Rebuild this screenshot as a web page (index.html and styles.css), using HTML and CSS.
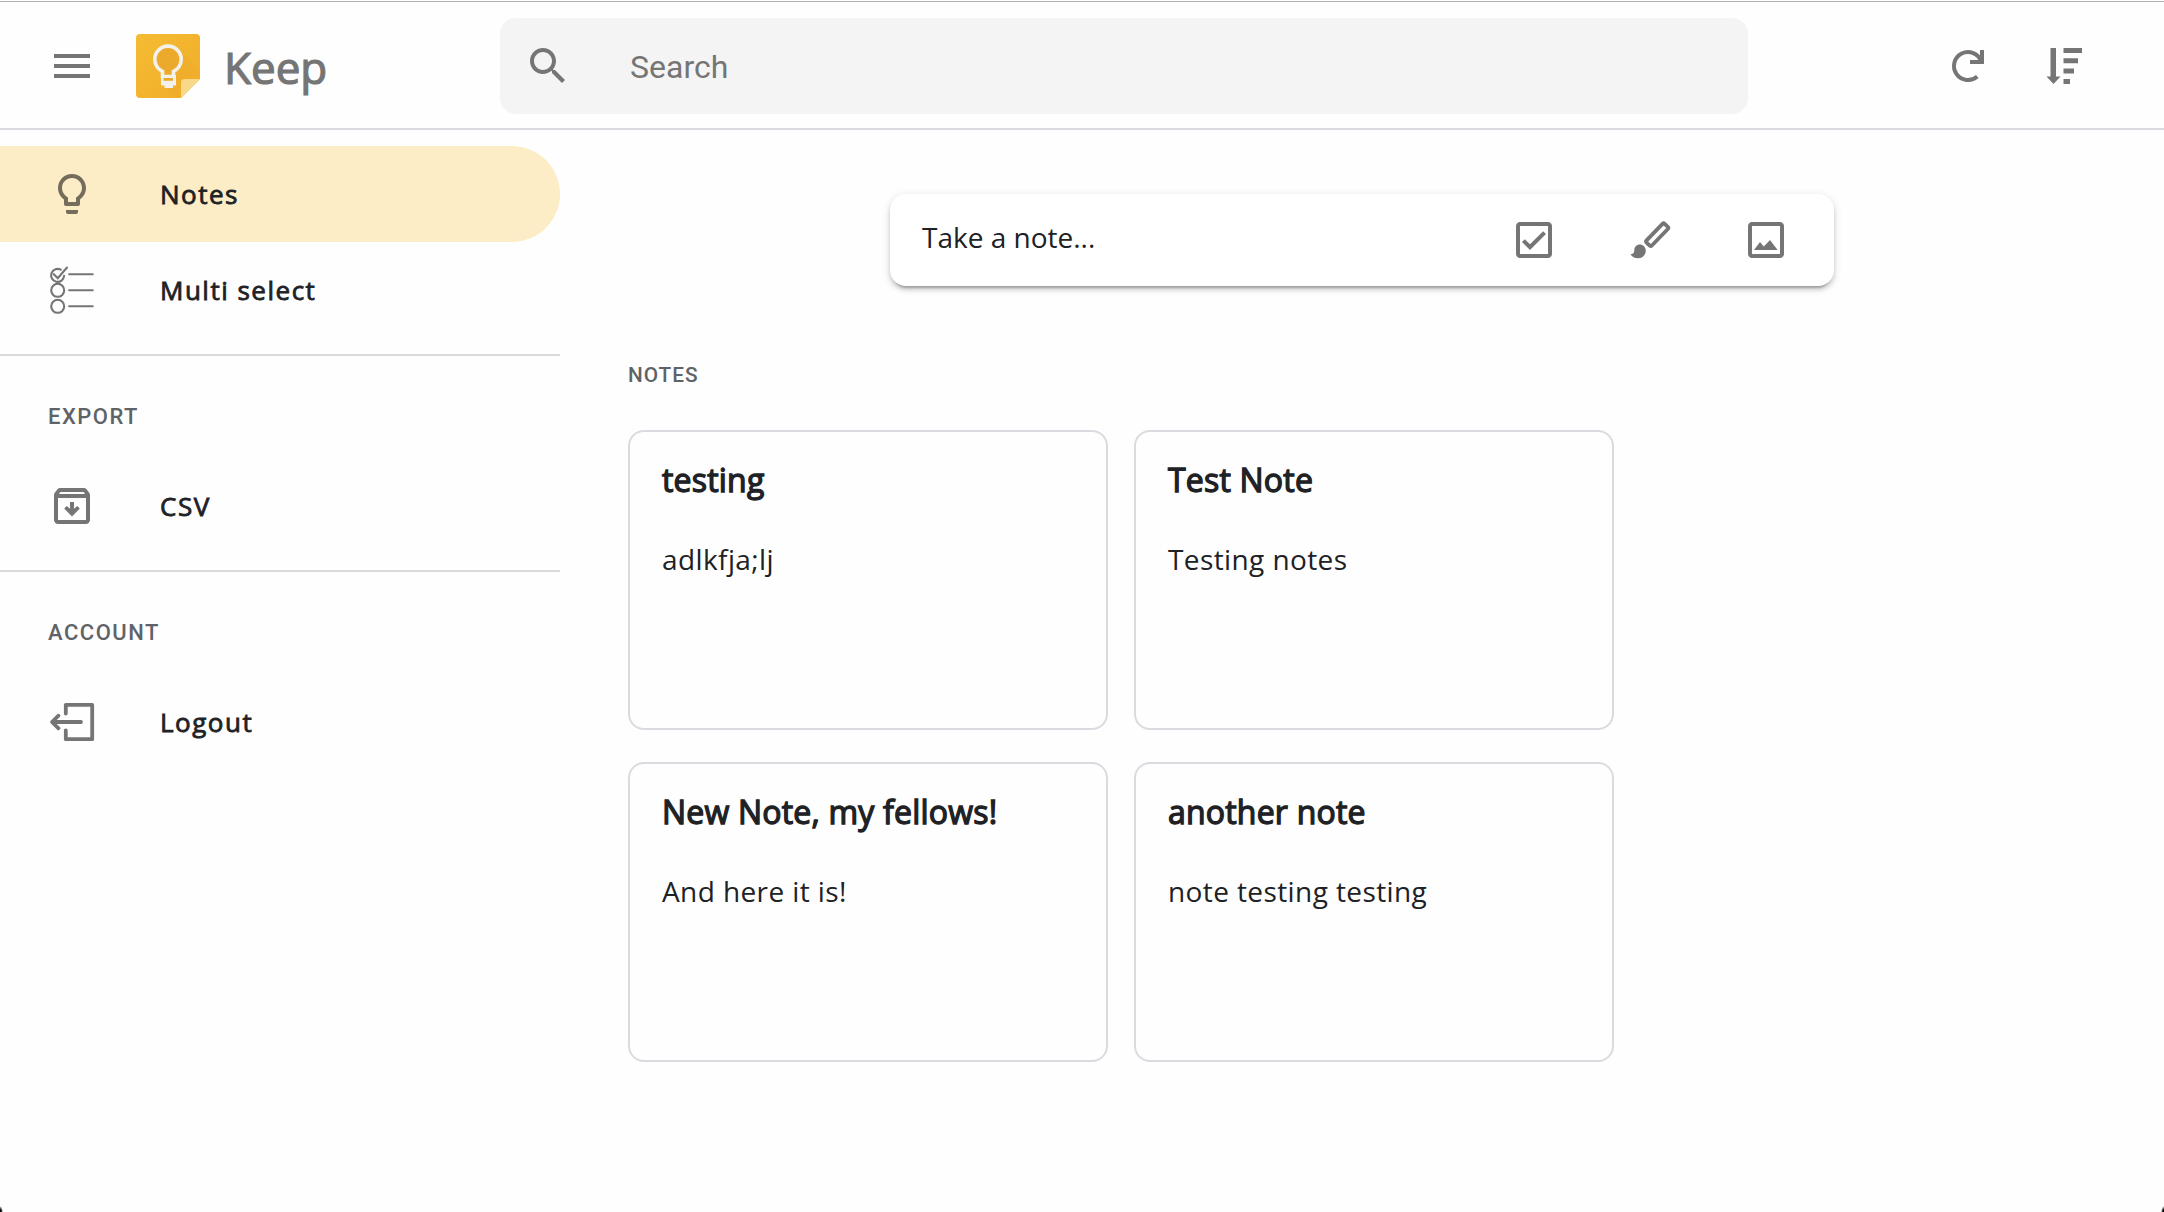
FILE: index.html
```
<!DOCTYPE html>
<html lang="en">
<head>
<meta charset="utf-8">
<title>Keep</title>
<link rel="stylesheet" href="styles.css">
</head>
<body>
<header class="topbar">
  <svg class="icon menu" viewBox="0 0 24 24"><path d="M3 18h18v-2H3v2zm0-5h18v-2H3v2zm0-7v2h18V6H3z"/></svg>
  <div class="brand">
    <svg class="logo" viewBox="0 0 64 64">
      <defs>
        <linearGradient id="paper" x1="0" y1="0" x2="1" y2="1"><stop offset="0" stop-color="#f5bb33"/><stop offset="1" stop-color="#f0ad29"/></linearGradient>
        <linearGradient id="shade" x1="0" y1="0" x2="1" y2="1"><stop offset="0" stop-color="#e8a52a"/><stop offset="1" stop-color="#f0ad29"/></linearGradient>
      </defs>
      <path fill="url(#paper)" d="M4 0h56a4 4 0 0 1 4 4v41L45 64H4a4 4 0 0 1-4-4V4a4 4 0 0 1 4-4z"/>
      <path fill="url(#shade)" d="M42 15L63 36V45H45V63L40 63L26 49Z" opacity=".45"/>
      <path fill="#fad88a" d="M45 64V49a4 4 0 0 1 4-4h15z"/>
      <path fill="#ebaa2c" stroke="#f3f1ec" stroke-width="3.600" d="M26.500 42.500v-5.200a13.200 13.200 0 1 1 11 0v5.200z"/>
      <path fill="#f3f1ec" d="M25 41h15v10.500h-3V54h-8.500v-2.500H25z"/>
      <path fill="#ebaa2c" d="M27.500 44h9.500v2.800h-9.500z"/>
    </svg>
    <span class="brand-name">Keep</span>
  </div>
  <div class="search">
    <svg class="icon" viewBox="0 0 24 24"><path d="M15.500 14h-.79l-.28-.27C15.410 12.590 16 11.110 16 9.500 16 5.910 13.090 3 9.500 3S3 5.910 3 9.500 5.910 16 9.500 16c1.610 0 3.090-.59 4.230-1.570l.27.28v.79l5 4.990L20.490 19l-4.990-5zm-6 0C7.010 14 5 11.990 5 9.500S7.010 5 9.500 5 14 7.010 14 9.500 11.990 14 9.500 14z"/></svg>
    <span class="search-hint">Search</span>
  </div>
  <div class="actions">
    <svg class="icon" viewBox="0 0 24 24"><path class="line" d="M16.650 17.250A7 7 0 1 1 18.600 9.700"/><path d="M20 4v7h-7V9h4.200L18 7.600V4z"/></svg>
    <svg class="icon" viewBox="0 0 48 48"><path d="M10.500 6h5.500v28.500h4.500L13.500 42l-7-7.500h4zM23.500 6H42v5H23.500zm0 10.300H38v5H23.500zm0 10.300h10.500v5H23.500zm0 10.400H30v5h-6.500z"/></svg>
  </div>
</header>
<div class="layout">
  <nav class="sidebar">
    <section class="group">
      <a class="item active">
        <svg class="icon" viewBox="0 0 24 24"><path d="M9 21c0 .5.4 1 1 1h4c.6 0 1-.5 1-1v-1H9v1zm3-19C8.100 2 5 5.100 5 9c0 2.400 1.200 4.500 3 5.700V17c0 .5.4 1 1 1h6c.6 0 1-.5 1-1v-2.300c1.800-1.300 3-3.400 3-5.700 0-3.900-3.100-7-7-7zm2.900 11.100l-.9.6V16h-4v-2.300l-.9-.6C7.800 12.200 7 10.600 7 9c0-2.800 2.200-5 5-5s5 2.200 5 5c0 1.600-.8 3.200-2.100 4.100z"/></svg>
        <span>Notes</span>
      </a>
      <a class="item">
        <svg class="icon" viewBox="0 0 48 48"><g class="thin"><path d="M12.800 3.700A6.500 6.500 0 1 0 16.100 9.800M5.800 8.200l4 4L19 1.500"/><circle cx="9.700" cy="24.300" r="6.500"/><circle cx="9.700" cy="40.300" r="6.500"/><path d="M21.200 8.300h23.500M21.200 24.300h23.500M21.200 40.300h23.500"/></g></svg>
        <span>Multi select</span>
      </a>
    </section>
    <section class="group">
      <h2 class="label">Export</h2>
      <a class="item">
        <svg class="icon" viewBox="0 0 24 24"><path d="M20.540 5.230l-1.390-1.680C18.880 3.210 18.470 3 18 3H6c-.47 0-.88.21-1.160.55L3.460 5.230C3.170 5.570 3 6.020 3 6.500V19c0 1.100.9 2 2 2h14c1.100 0 2-.9 2-2V6.500c0-.48-.17-.93-.46-1.270zM6.240 5h11.520l.83 1H5.420l.82-1zM5 19V8h14v11H5z"/><path d="M13 10h-2v3.400l-1.600-1.400-1.300 1.300L12 17.300l3.900-4-1.300-1.300-1.600 1.400z"/></svg>
        <span class="tight">CSV</span>
      </a>
    </section>
    <section class="group last">
      <h2 class="label">Account</h2>
      <a class="item">
        <svg class="icon" viewBox="0 0 48 48"><path class="line4" d="M17.800 15.500V6.800H44.200V41.200H17.800V32.500M33 24H4.500M10.500 17.700L4 24l6.500 6.300"/></svg>
        <span>Logout</span>
      </a>
    </section>
  </nav>
  <main class="content">
    <div class="composer">
      <span class="composer-hint">Take a note...</span>
      <div class="tools">
        <svg class="icon" viewBox="0 0 24 24"><path d="M19 3H5c-1.100 0-2 .9-2 2v14c0 1.100.9 2 2 2h14c1.100 0 2-.9 2-2V5c0-1.100-.9-2-2-2zm0 16H5V5h14v14zM17.990 9l-1.410-1.420-6.590 6.590-2.580-2.570-1.420 1.410 4 3.990z"/></svg>
        <svg class="icon" viewBox="0 0 48 48"><rect class="line4" x="-13" y="-3.700" width="26" height="7.400" rx="1.500" transform="translate(31.200 18.700) rotate(-46)"/><path d="M4.500 38.300c2.500 0 3.800-1.500 3.800-4.100 0-3.300 2.400-5.700 5.400-5.700 3.400 0 6.100 2.700 6.100 6.100 0 4.600-3.600 7.700-7.800 7.700-3.200 0-6-1.600-7.500-4z"/></svg>
        <svg class="icon" viewBox="0 0 24 24"><path d="M19 3H5c-1.100 0-2 .9-2 2v14c0 1.100.9 2 2 2h14c1.100 0 2-.9 2-2V5c0-1.100-.9-2-2-2zm0 16H5V5h14v14zM6 17l3-4 1.900 2.300L14 12l3.800 5z"/></svg>
      </div>
    </div>
    <h2 class="label notes-label">Notes</h2>
    <div class="notes">
      <article class="note"><h3>testing</h3><p>adlkfja;lj</p></article>
      <article class="note"><h3>Test Note</h3><p>Testing notes</p></article>
      <article class="note"><h3>New Note, my fellows!</h3><p>And here it is!</p></article>
      <article class="note"><h3>another note</h3><p>note testing testing</p></article>
    </div>
  </main>
</div>
<div class="corners"></div>
</body>
</html>
```
FILE: styles.css
```
* { box-sizing: border-box; margin: 0; padding: 0; }

body {
  height: 1212px;
  overflow: hidden;
  background: #fefefe;
  color: #202124;
  font-family: "Open Sans", "Noto Sans", sans-serif;
}

.icon { width: 48px; height: 48px; flex: none; display: block; fill: #757575; }
.line, .line4, .thin { fill: none; stroke: #757575; }
.line { stroke-width: 2; }
.line4 { stroke-width: 3.8; stroke-linecap: round; stroke-linejoin: round; }
.thin { stroke-width: 2.1; stroke-linecap: round; }

.topbar {
  display: flex;
  align-items: center;
  height: 130px;
  margin-bottom: 16px;
  padding: 4px 76px 0 48px;
  border-bottom: 2px solid #dadbe0;
  box-shadow: inset 0 1px #fefefe, inset 0 2px #b0b0b0;
}
.brand { display: flex; align-items: center; width: 364px; margin-left: 40px; }
.logo { width: 64px; height: 64px; }
.brand-name {
  margin-left: 24px;
  padding-top: 1px;
  color: #757575;
  font-size: 44px;
  line-height: 60px;
  -webkit-text-stroke: 1.2px;
}
.search {
  display: flex;
  align-items: center;
  width: 1248px;
  height: 96px;
  padding-left: 24px;
  border-radius: 16px;
  background: #f4f4f4;
}
.search-hint { margin-left: 58px; padding-top: 2px; color: #757575; font: 32px/38px Roboto, sans-serif; }
.actions { display: flex; gap: 48px; margin-left: auto; }

.layout { display: flex; }
.sidebar { width: 560px; flex: none; }
.group { padding-bottom: 16px; border-bottom: 2px solid #dadada; }
.group.last { border: 0; }
.label {
  height: 102px;
  padding: 48px 0 0 48px;
  color: #5f6368;
  font: 500 22px/26px Roboto, sans-serif;
  letter-spacing: 1.5px;
  text-transform: uppercase;
}
.item {
  display: flex;
  align-items: center;
  gap: 64px;
  height: 96px;
  padding-left: 48px;
  border-radius: 0 48px 48px 0;
  font-size: 26px;
  line-height: 36px;
  letter-spacing: 1.5px;
  -webkit-text-stroke: .8px;
}
.item.active { background: #fdedc6; }
.item.active .icon { fill: #756d5b; }
.tight { letter-spacing: 1.5px; }

.content { flex: 1; padding: 48px 330px 0 68px; }
.composer {
  display: flex;
  align-items: center;
  width: 944px;
  height: 92px;
  margin-left: 262px;
  padding: 0 44px 0 32px;
  border-radius: 16px;
  background: #fff;
  box-shadow: 0 6px 2px -4px rgba(0,0,0,.2), 0 4px 4px 0 rgba(0,0,0,.14), 0 2px 10px 0 rgba(0,0,0,.12);
}
.composer-hint { padding-bottom: 6px; font-size: 28px; line-height: 40px; }
.tools { display: flex; gap: 68px; margin-left: auto; }
.notes-label { height: 144px; padding: 76px 0 0; font-size: 20.8px; letter-spacing: 1px; }
.notes { display: grid; grid-template-columns: 480px 480px; grid-auto-rows: 300px; gap: 32px 26px; }
.note { padding: 26px 32px; border: 2px solid #dadbe0; border-radius: 16px; }
.note h3 { font-size: 32px; font-weight: 400; line-height: 44px; letter-spacing: .2px; -webkit-text-stroke: 1.3px; }
.note p { margin-top: 39px; font-size: 28px; line-height: 36px; letter-spacing: .4px; }

/* Rounded lower corners of the window */
.corners {
  position: fixed;
  inset: auto 0 0;
  height: 6px;
  background:
    radial-gradient(ellipse 3px 6px at 0 100%, #000 40%, transparent) left / 3px 6px no-repeat,
    radial-gradient(ellipse 3px 6px at 100% 100%, #000 40%, transparent) right / 3px 6px no-repeat;
}
```
